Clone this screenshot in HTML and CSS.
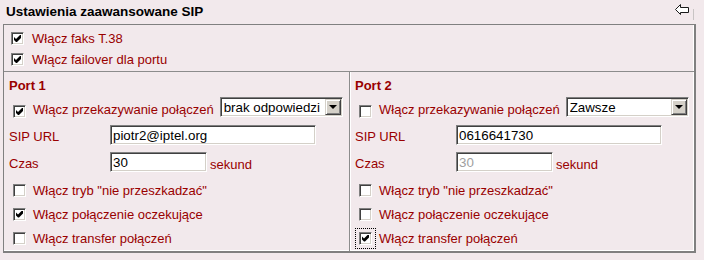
FILE: index.html
```html
<!DOCTYPE html>
<html lang="pl">
<head>
    <meta charset="UTF-8">
    <title>Ustawienia zaawansowane SIP</title>
    <link rel="stylesheet" href="styles.css">
</head>
<body>

    <div class="header">
        <h2>Ustawienia zaawansowane SIP</h2>
        <a class="back" href="#" title="Wstecz">
            <svg width="15" height="12" viewBox="0 0 15 12">
                <path d="M0.5 5.5 L5.5 0.5 V3.5 H13.5 V8.5 H5.5 V10.5 Z" fill="#fff" stroke="#1a1a1a" stroke-width="1"/>
            </svg>
        </a>
        <span class="sep"></span>
    </div>

    <div class="panel">
        <div class="general">
            <label class="row"><input type="checkbox" class="cb" checked> Włącz faks T.38</label>
            <label class="row"><input type="checkbox" class="cb" checked> Włącz failover dla portu</label>
        </div>

        <div class="ports">
            <div class="port port1">
                <h3>Port 1</h3>
                <div class="fwd">
                    <input type="checkbox" class="cb" checked>
                    <span class="lbl">Włącz przekazywanie połączeń</span>
                    <div class="select">
                        <select>
                            <option>brak odpowiedzi</option>
                            <option>Zawsze</option>
                            <option>zajęty</option>
                        </select>
                        <span class="drop"></span>
                    </div>
                </div>
                <div class="field">
                    <span class="name">SIP URL</span>
                    <input type="text" class="txt url" value="piotr2@iptel.org">
                </div>
                <div class="field">
                    <span class="name">Czas</span>
                    <input type="text" class="txt time" value="30">
                    <span class="unit">sekund</span>
                </div>
                <label class="opt"><input type="checkbox" class="cb"> Włącz tryb "nie przeszkadzać"</label>
                <label class="opt"><input type="checkbox" class="cb" checked> Włącz połączenie oczekujące</label>
                <label class="opt"><input type="checkbox" class="cb"> Włącz transfer połączeń</label>
            </div>

            <div class="port port2">
                <h3>Port 2</h3>
                <div class="fwd">
                    <input type="checkbox" class="cb">
                    <span class="lbl">Włącz przekazywanie połączeń</span>
                    <div class="select">
                        <select>
                            <option>Zawsze</option>
                            <option>brak odpowiedzi</option>
                            <option>zajęty</option>
                        </select>
                        <span class="drop"></span>
                    </div>
                </div>
                <div class="field">
                    <span class="name">SIP URL</span>
                    <input type="text" class="txt url" value="0616641730">
                </div>
                <div class="field">
                    <span class="name">Czas</span>
                    <input type="text" class="txt time" value="30" disabled>
                    <span class="unit">sekund</span>
                </div>
                <label class="opt"><input type="checkbox" class="cb"> Włącz tryb "nie przeszkadzać"</label>
                <label class="opt"><input type="checkbox" class="cb"> Włącz połączenie oczekujące</label>
                <label class="opt"><input type="checkbox" class="cb focus" checked> Włącz transfer połączeń</label>
            </div>
        </div>
    </div>

</body>
</html>
```

FILE: styles.css
```css
body {
    margin: 0;
    background: #f2e9ec;
    font-family: "Liberation Sans", Arial, sans-serif;
    font-size: 13px;
    color: #990000;
}

.header {
    display: flex;
    align-items: flex-start;
    height: 24px;
    padding-left: 6px;
}

.header h2 {
    flex: 1;
    margin: 0;
    font-size: 13.5px;
    line-height: 24px;
    color: #000;
}

.back {
    display: block;
    margin-top: 4px;
    line-height: 0;
}

.sep {
    width: 1px;
    height: 11px;
    margin: 9px 10px 0 3px;
    background: #c8c4c4;
}

.panel {
    width: 690px;
    margin-left: 3px;
    border-style: solid;
    border-color: #808080;
    border-width: 1px 2px 2px 1px;
    box-shadow: inset -1px -1px #fff;
}

.general {
    padding: 3px 0 1px 7px;
    border-bottom: 1px solid #8c8c8c;
}

.row {
    display: flex;
    align-items: center;
    height: 21px;
    gap: 8px;
}

.ports {
    display: grid;
    grid-template-columns: 346px 1fr;
}

.port {
    padding: 5px 0 1px 5px;
}

.port1 {
    border-right: 1px solid #8c8c8c;
}

.port2 {
    border-left: 1px solid #fff;
    padding-left: 4px;
}

.port h3 {
    margin: 0;
    font-size: 13px;
    line-height: 18px;
}

.fwd {
    display: flex;
    align-items: flex-end;
    height: 25px;
    padding-left: 4px;
}

.fwd .cb {
    margin-bottom: 2px;
    margin-right: 7px;
}

.fwd .lbl {
    line-height: 16px;
    margin-bottom: 2px;
}

/* windows classic checkbox */
.cb {
    appearance: none;
    -webkit-appearance: none;
    position: relative;
    flex: none;
    width: 13px;
    height: 13px;
    margin: 0;
    border: 1px solid;
    border-color: #808080 #fff #fff #808080;
    box-shadow: inset 1px 1px #404040, inset -1px -1px #d4d0c8;
    background: #fff;
}

.cb:checked::after {
    content: "";
    position: absolute;
    left: 2px;
    top: 2px;
    width: 7px;
    height: 7px;
    background: #000;
    clip-path: polygon(0 2px, 2px 4px, 6px 0, 7px 0, 7px 3px, 3px 7px, 2px 7px, 0 5px);
}

.cb.focus {
    outline: 1px dotted #000;
    outline-offset: 3px;
}

.select {
    display: flex;
    width: 123px;
    height: 20px;
    box-sizing: border-box;
    margin: 0 0 3px 6px;
    border: 1px solid;
    border-color: #808080 #fff #fff #808080;
    box-shadow: inset 1px 1px #404040, inset -1px -1px #d4d0c8;
    background: #fff;
    padding: 1px;
}

.select select {
    appearance: none;
    -webkit-appearance: none;
    flex: 1;
    min-width: 0;
    border: 0;
    padding: 0 0 0 2px;
    background: transparent;
    font-family: "Liberation Sans", Arial, sans-serif;
    font-size: 13.33px;
    color: #000;
    outline: none;
}

.drop {
    display: flex;
    align-items: center;
    justify-content: center;
    width: 16px;
    box-sizing: border-box;
    background: #d4d0c8;
    border: 1px solid;
    border-color: #d4d0c8 #404040 #404040 #d4d0c8;
    box-shadow: inset 1px 1px #fff, inset -1px -1px #808080;
}

.drop::after {
    content: "";
    border-left: 4px solid transparent;
    border-right: 4px solid transparent;
    border-top: 4px solid #000;
}

.field {
    display: flex;
    align-items: center;
    margin-top: 5px;
}

.field + .field {
    margin-top: 7px;
}

.name {
    width: 101px;
    padding-top: 2px;
}

.txt {
    height: 20px;
    box-sizing: border-box;
    margin: 0;
    padding: 0 2px;
    border: 1px solid;
    border-color: #808080 #fff #fff #808080;
    box-shadow: inset 1px 1px #404040, inset -1px -1px #d4d0c8;
    background: #fff;
    font-family: "Liberation Sans", Arial, sans-serif;
    font-size: 13.33px;
    color: #000;
}

.txt:disabled {
    color: #a0a0a0;
}

.url {
    width: 206px;
}

.time {
    width: 97px;
}

.unit {
    margin-left: 3px;
    padding-top: 4px;
}

.opt {
    display: flex;
    align-items: center;
    gap: 7px;
    height: 24px;
    padding-left: 4px;
}

.field + .opt {
    margin-top: 6px;
}
```
